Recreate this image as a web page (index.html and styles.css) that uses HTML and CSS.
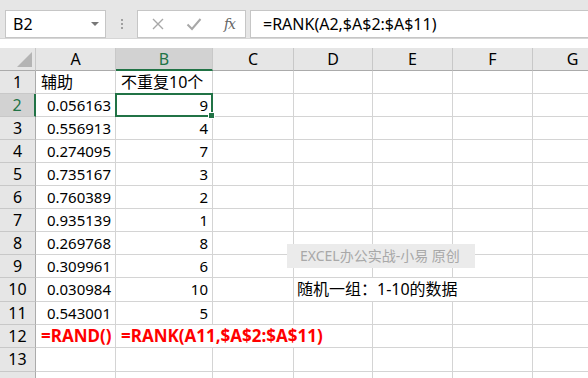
FILE: index.html
```html
<!DOCTYPE html>
<html lang="zh-CN">
<head>
<meta charset="UTF-8">
<title>RANK</title>
<link rel="stylesheet" href="styles.css">
</head>
<body>
<div class="toolbar">
    <div class="name-box">B2<span class="drop"></span></div>
    <div class="dots"><i></i><i></i><i></i></div>
    <div class="fx-box">
        <svg class="ico" width="14" height="14" viewBox="0 0 14 14"><path d="M2 2 L12 12 M12 2 L2 12" stroke="#a8a8a8" stroke-width="1.4" fill="none"/></svg>
        <svg class="ico" width="16" height="14" viewBox="0 0 16 14"><path d="M1.5 7.5 L6 12 L14.5 2" stroke="#a8a8a8" stroke-width="2" fill="none"/></svg>
        <span class="fx">fx</span>
    </div>
    <div class="formula">=RANK(A2,$A$2:$A$11)</div>
</div>

<div class="sheet">
    <div class="corner"><span class="tri"></span></div>
    <div class="ch">A</div>
    <div class="ch sel">B</div>
    <div class="ch">C</div>
    <div class="ch">D</div>
    <div class="ch">E</div>
    <div class="ch">F</div>
    <div class="ch">G</div>

    <div class="rh">1</div>
    <div class="c cjk">辅助</div>
    <div class="c cjk">不重复10个</div>
    <div class="c"></div><div class="c"></div><div class="c"></div><div class="c"></div><div class="c"></div>

    <div class="rh sel">2</div>
    <div class="c num">0.056163</div>
    <div class="c num active">9<span class="handle"></span></div>
    <div class="c"></div><div class="c"></div><div class="c"></div><div class="c"></div><div class="c"></div>

    <div class="rh">3</div>
    <div class="c num">0.556913</div><div class="c num">4</div>
    <div class="c"></div><div class="c"></div><div class="c"></div><div class="c"></div><div class="c"></div>

    <div class="rh">4</div>
    <div class="c num">0.274095</div><div class="c num">7</div>
    <div class="c"></div><div class="c"></div><div class="c"></div><div class="c"></div><div class="c"></div>

    <div class="rh">5</div>
    <div class="c num">0.735167</div><div class="c num">3</div>
    <div class="c"></div><div class="c"></div><div class="c"></div><div class="c"></div><div class="c"></div>

    <div class="rh">6</div>
    <div class="c num">0.760389</div><div class="c num">2</div>
    <div class="c"></div><div class="c"></div><div class="c"></div><div class="c"></div><div class="c"></div>

    <div class="rh">7</div>
    <div class="c num">0.935139</div><div class="c num">1</div>
    <div class="c"></div><div class="c"></div><div class="c"></div><div class="c"></div><div class="c"></div>

    <div class="rh">8</div>
    <div class="c num">0.269768</div><div class="c num">8</div>
    <div class="c"></div><div class="c"></div><div class="c"></div><div class="c"></div><div class="c"></div>

    <div class="rh">9</div>
    <div class="c num">0.309961</div><div class="c num">6</div>
    <div class="c"></div><div class="c"></div><div class="c"></div><div class="c"></div><div class="c"></div>

    <div class="rh">10</div>
    <div class="c num">0.030984</div><div class="c num">10</div>
    <div class="c"></div>
    <div class="c cjk span3">随机一组：1-10的数据</div>
    <div class="c"></div>

    <div class="rh">11</div>
    <div class="c num">0.543001</div><div class="c num">5</div>
    <div class="c"></div><div class="c"></div><div class="c"></div><div class="c"></div><div class="c"></div>

    <div class="rh">12</div>
    <div class="c red">=RAND()</div>
    <div class="c red span3">=RANK(A11,$A$2:$A$11)</div>
    <div class="c"></div><div class="c"></div><div class="c"></div>

    <div class="rh">13</div>
    <div class="c"></div><div class="c"></div><div class="c"></div><div class="c"></div><div class="c"></div><div class="c"></div><div class="c"></div>

    <div class="rh"></div>
    <div class="c"></div><div class="c"></div><div class="c"></div><div class="c"></div><div class="c"></div><div class="c"></div><div class="c"></div>

    <div class="watermark">EXCEL办公实战-小易 原创</div>
</div>
</body>
</html>
```

FILE: styles.css
```css
body {
    margin: 0;
    width: 588px;
    height: 378px;
    overflow: hidden;
    background-color: #ffffff;
    font-family: "Noto Sans", "Noto Sans CJK SC", sans-serif;
    color: #000000;
}

.toolbar {
    height: 39px;
    background-color: #e6e6e6;
    border-bottom: 1px solid #d6d6d6;
    display: flex;
    align-items: flex-start;
    padding: 10px 0 0 5px;
    box-sizing: border-box;
}
.name-box {
    width: 101px;
    height: 28px;
    box-sizing: border-box;
    background-color: #ffffff;
    border: 1px solid #c6c6c6;
    font-size: 16px;
    line-height: 26px;
    padding-left: 7px;
    position: relative;
}
.drop {
    position: absolute;
    right: 6px;
    top: 11px;
    border-left: 4px solid transparent;
    border-right: 4px solid transparent;
    border-top: 4px solid #777777;
}
.dots {
    width: 31px;
    height: 28px;
    display: flex;
    flex-direction: column;
    align-items: center;
    justify-content: center;
    gap: 2px;
}
.dots i {
    display: block;
    width: 2px;
    height: 2px;
    background-color: #a0a0a0;
}
.fx-box {
    width: 109px;
    height: 28px;
    box-sizing: border-box;
    background-color: #ffffff;
    border: 1px solid #c6c6c6;
    display: flex;
    align-items: center;
    justify-content: space-between;
    padding: 0 10px 0 13px;
}
.fx {
    font-family: "DejaVu Serif", serif;
    font-style: italic;
    font-size: 14px;
    color: #666666;
    letter-spacing: -1px;
}
.formula {
    flex: 1;
    margin-left: 4px;
    height: 28px;
    box-sizing: border-box;
    background-color: #ffffff;
    border: 1px solid #c6c6c6;
    border-right: none;
    font-size: 16px;
    line-height: 26px;
    padding-left: 12px;
}

.sheet {
    position: relative;
    margin-top: 9px;
    display: grid;
    grid-template-columns: 36px 80px 97px 81px 79px 80px 80px 80px;
    grid-template-rows: 23px 23px 23px 23px 23px 23px 23px 23px 23px 23px 24px 23px 23px 24px 23px;
    font-size: 15px;
}
.corner, .ch, .rh {
    background-color: #e6e6e6;
    box-sizing: border-box;
    font-size: 16px;
}
.corner {
    border-right: 1px solid #c8c8c8;
    border-bottom: 1px solid #ababab;
    position: relative;
}
.tri {
    position: absolute;
    right: 3px;
    bottom: 3px;
    border-left: 15px solid transparent;
    border-bottom: 15px solid #b4b4b4;
}
.ch {
    border-right: 1px solid #c8c8c8;
    border-bottom: 1px solid #ababab;
    text-align: center;
    line-height: 22px;
}
.ch.sel {
    background-color: #d2d2d2;
    color: #217346;
    border-bottom: 2px solid #217346;
}
.rh {
    border-right: 1px solid #ababab;
    border-bottom: 1px solid #c8c8c8;
    text-align: center;
    line-height: 22px;
}
.rh.sel {
    background-color: #d2d2d2;
    color: #217346;
    border-right: 2px solid #217346;
}
.c {
    box-sizing: border-box;
    border-right: 1px solid #d4d4d4;
    border-bottom: 1px solid #d4d4d4;
    padding: 0 4px 0 5px;
    line-height: 22px;
    white-space: nowrap;
}
.cjk {
    font-size: 16px;
}
.num {
    text-align: right;
}
.active {
    position: relative;
    border: 2px solid #217346;
    margin: -1px 0 0 -1px;
    line-height: 20px;
    padding-right: 3px;
}
.handle {
    position: absolute;
    right: -4px;
    bottom: -4px;
    width: 5px;
    height: 5px;
    background-color: #217346;
    border: 1px solid #ffffff;
}
.span3 {
    grid-column: span 3;
    padding-left: 3px;
}
.red {
    color: #ff0000;
    font-weight: bold;
    font-size: 17px;
}
.red.span3 {
    padding-left: 5px;
}
.watermark {
    position: absolute;
    left: 287px;
    top: 196px;
    width: 188px;
    height: 24px;
    background-color: #ebebeb;
    color: #a8a8a8;
    font-size: 14px;
    line-height: 24px;
    padding-left: 13px;
    box-sizing: border-box;
}
```
